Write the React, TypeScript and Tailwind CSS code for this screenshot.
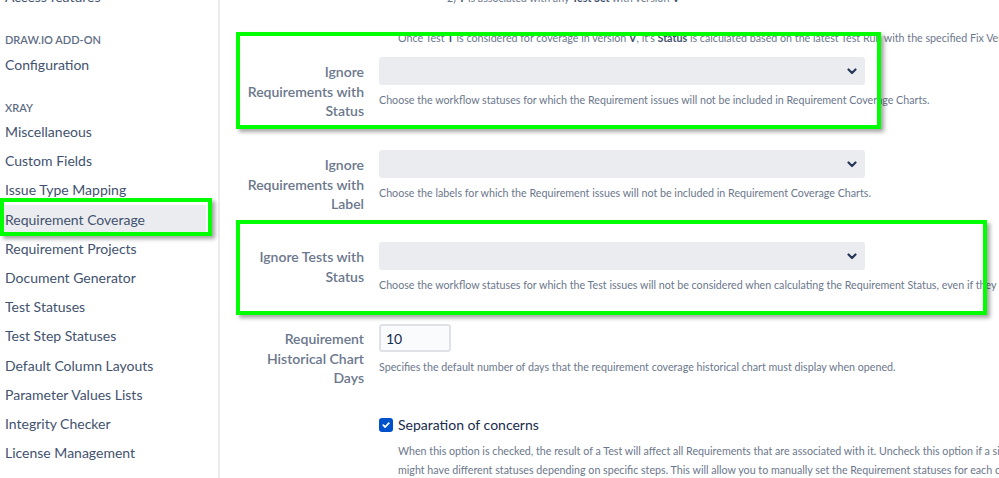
import React from "react";

const sidebarItems = [
  "Miscellaneous",
  "Custom Fields",
  "Issue Type Mapping",
  "Requirement Coverage",
  "Requirement Projects",
  "Document Generator",
  "Test Statuses",
  "Test Step Statuses",
  "Default Column Layouts",
  "Parameter Values Lists",
  "Integrity Checker",
  "License Management",
];

const Chevron = () => (
  <svg width="10" height="7" viewBox="0 0 10 7" className="text-[#253858]">
    <path d="M1.5 1.5 L5 5 L8.5 1.5" fill="none" stroke="currentColor" strokeWidth="2.2" strokeLinecap="round" strokeLinejoin="round" />
  </svg>
);

const SelectBox = () => (
  <div className="flex h-[28px] w-[486px] items-center justify-end rounded-[3px] bg-[#ebecf0] pr-[8px]">
    <Chevron />
  </div>
);

const Desc = ({ children }: { children: React.ReactNode }) => (
  <p className="mt-[6px] whitespace-nowrap text-[10.7px] leading-[18px] text-[#6b778c]">{children}</p>
);

const FormRow = ({
  label,
  height,
  children,
}: {
  label: string[];
  height: string;
  children: React.ReactNode;
}) => (
  <div className={`flex ${height}`}>
    <div className="w-[144px] shrink-0 pt-[5px] text-right text-[14px] font-semibold leading-[19.5px] text-[#6b778c]">
      {label.map((l) => (
        <div key={l}>{l}</div>
      ))}
    </div>
    <div className="ml-[15px]">{children}</div>
  </div>
);

// green annotation rectangles drawn over the screenshot
const Highlight = ({ className }: { className: string }) => (
  <div
    className={`pointer-events-none absolute border-[4px] border-[#00ff00] shadow-[3px_3px_4px_rgba(0,0,0,0.35)] ${className}`}
  />
);

export default function App() {
  return (
    <div
      className="relative flex h-[478px] w-[999px] overflow-hidden bg-white"
      style={{ fontFamily: 'Lato, "Noto Sans", sans-serif' }}
    >
      {/* sidebar */}
      <aside className="w-[220px] shrink-0 border-r-2 border-[#ebecf0]">
        <div className="-mt-[18px]">
          <div className="flex h-[29px] items-center pl-[5px] text-[14px] text-[#42526e]">Access features</div>
          <div className="mt-[21px] pl-[5px] text-[11px] font-semibold uppercase leading-[16px] text-[#5e6c84]">
            Draw.io Add-on
          </div>
          <div className="mt-[1.5px] flex h-[29px] items-center pl-[5px] text-[14px] text-[#42526e]">Configuration</div>
          <div className="mt-[21px] pl-[5px] text-[11px] font-semibold uppercase leading-[16px] text-[#5e6c84]">
            Xray
          </div>
          <ul className="mt-[1.5px] pr-[12px]">
            {sidebarItems.map((item) => (
              <li
                key={item}
                className={`flex h-[29.2px] items-center pl-[5px] text-[14px] text-[#42526e] ${
                  item === "Requirement Coverage" ? "bg-[#ebecf0]" : ""
                }`}
              >
                {item}
              </li>
            ))}
          </ul>
        </div>
      </aside>

      {/* main */}
      <main className="flex-1">
        <div className="-mt-[11px] flex whitespace-nowrap pl-[213px] text-[10.7px] leading-[18px] text-[#6b778c]">
          <span className="mr-[10px]">-</span>
          <span>
            2) <b className="text-[#42526e]">T</b> is associated with any <b className="text-[#42526e]">Test Set</b> with version{" "}
            <b className="text-[#42526e]">V</b>
          </span>
        </div>
        <p className="mt-[22px] whitespace-nowrap pl-[178px] text-[10.7px] leading-[18px] text-[#6b778c]">
          Once Test <b className="text-[#42526e]">T</b> is considered for coverage in version{" "}
          <b className="text-[#42526e]">V</b>, it's <b className="text-[#42526e]">Status</b> is calculated based on
          the latest Test Run with the specified Fix Version
        </p>

        <div className="mt-[10px]">
          <FormRow label={["Ignore", "Requirements with", "Status"]} height="h-[93px]">
            <SelectBox />
            <Desc>
              Choose the workflow statuses for which the Requirement issues will not be included in Requirement
              Coverage Charts.
            </Desc>
          </FormRow>
          <FormRow label={["Ignore", "Requirements with", "Label"]} height="h-[92px]">
            <SelectBox />
            <Desc>Choose the labels for which the Requirement issues will not be included in Requirement Coverage Charts.</Desc>
          </FormRow>
          <FormRow label={["Ignore Tests with", "Status"]} height="h-[82px]">
            <SelectBox />
            <Desc>
              Choose the workflow statuses for which the Test issues will not be considered when calculating the
              Requirement Status, even if they are associated.
            </Desc>
          </FormRow>
          <FormRow label={["Requirement", "Historical Chart", "Days"]} height="h-[88px]">
            <div className="flex h-[28px] w-[72px] items-center rounded-[3px] border-2 border-[#dfe1e6] bg-[#fafbfc] pl-[5px] text-[14px] text-[#172b4d]">
              10
            </div>
            <Desc>Specifies the default number of days that the requirement coverage historical chart must display when opened.</Desc>
          </FormRow>

          <div className="ml-[159px] mt-[3px]">
            <label className="flex items-center">
              <span className="flex h-[14px] w-[14px] items-center justify-center rounded-[3px] bg-[#0052cc]">
                <svg width="10" height="10" viewBox="0 0 10 10">
                  <path d="M2.3 5.2 L4.2 7 L7.8 3.2" fill="none" stroke="white" strokeWidth="1.8" strokeLinecap="round" strokeLinejoin="round" />
                </svg>
              </span>
              <span className="ml-[5px] text-[14px] leading-[20px] text-[#172b4d]">Separation of concerns</span>
            </label>
            <div className="ml-[19px] mt-[6px] whitespace-nowrap text-[10.7px] leading-[19px] text-[#6b778c]">
              <p>
                When this option is checked, the result of a Test will affect all Requirements that are associated
                with it. Uncheck this option if a single Test covers several Requirements
              </p>
              <p>
                might have different statuses depending on specific steps. This will allow you to manually set the
                Requirement statuses for each one.
              </p>
            </div>
          </div>
        </div>
      </main>

      <Highlight className="left-0 top-[198px] h-[38px] w-[212px]" />
      <Highlight className="left-[236px] top-[32px] h-[97px] w-[645px]" />
      <Highlight className="left-[236px] top-[220px] h-[95px] w-[751px]" />
    </div>
  );
}
